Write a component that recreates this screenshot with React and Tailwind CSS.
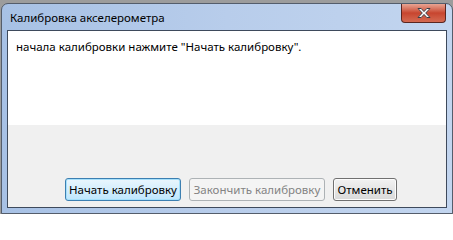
const font = { fontFamily: '"Noto Sans", "Open Sans", sans-serif' };

const CloseIcon = () => (
  <svg width="16" height="12" viewBox="0 0 16 12">
    <path
      d="M2 1.5h3.2L8 4.6l2.8-3.1H14L9.7 6l4.3 4.5h-3.2L8 7.4l-2.8 3.1H2L6.3 6z"
      fill="#fff"
      stroke="#3a3f48"
      strokeWidth="1"
      strokeLinejoin="round"
    />
  </svg>
);

export default function App() {
  return (
    <div className="w-[453px] h-[214px] bg-[#9c9c9c] pt-[3px] pl-[1px] overflow-hidden" style={font}>
      <div className="w-[452px] h-[211px] rounded-t-[7px] border border-[#545d6b] bg-gradient-to-r from-[#a7c1e5] via-[#b8cdeb] to-[#c2d5ef] flex flex-col px-[5px] pb-[5px]">
        {/* заголовок */}
        <div className="h-[26px] flex items-start justify-between">
          <span className="text-[11.5px] text-black mt-[7px] ml-[3px] leading-[14px]">
            Калибровка акселерометра
          </span>
          <div className="mr-[1px] w-[45px] h-[19px] rounded-b-[4px] border border-t-0 border-[#5a2620] bg-gradient-to-b from-[#e8a493] via-[#c7452f] to-[#d46a52] flex items-center justify-center">
            <CloseIcon />
          </div>
        </div>

        {/* клиентская область */}
        <div className="flex-1 border border-[#3e4a5c] bg-[#f0f0f0] flex flex-col">
          <div className="h-[94px] bg-white px-[8px] pt-[8px]">
            <p className="text-[11.5px] leading-[15px] text-black">
              начала калибровки нажмите "Начать калибровку".
            </p>
          </div>
          <div className="flex-1 flex items-end pl-[57px] pb-[6px] gap-[8px]">
            <button className="w-[116px] h-[23px] rounded-[3px] border border-[#3c7fb1] bg-gradient-to-b from-[#eaf6fd] to-[#bee6fd] text-[11.5px] text-black shadow-[inset_0_0_0_1px_#a6e0fb]">
              Начать калибровку
            </button>
            <button className="w-[136px] h-[23px] rounded-[3px] border border-[#adb2b5] bg-[#f4f4f4] text-[11.5px] text-[#838383]">
              Закончить калибровку
            </button>
            <button className="w-[64px] h-[23px] rounded-[3px] border border-[#707070] bg-gradient-to-b from-[#f2f2f2] to-[#d9d9d9] text-[11.5px] text-black shadow-[inset_0_0_0_1px_#fcfcfc]">
              Отменить
            </button>
          </div>
        </div>
      </div>
    </div>
  );
}
